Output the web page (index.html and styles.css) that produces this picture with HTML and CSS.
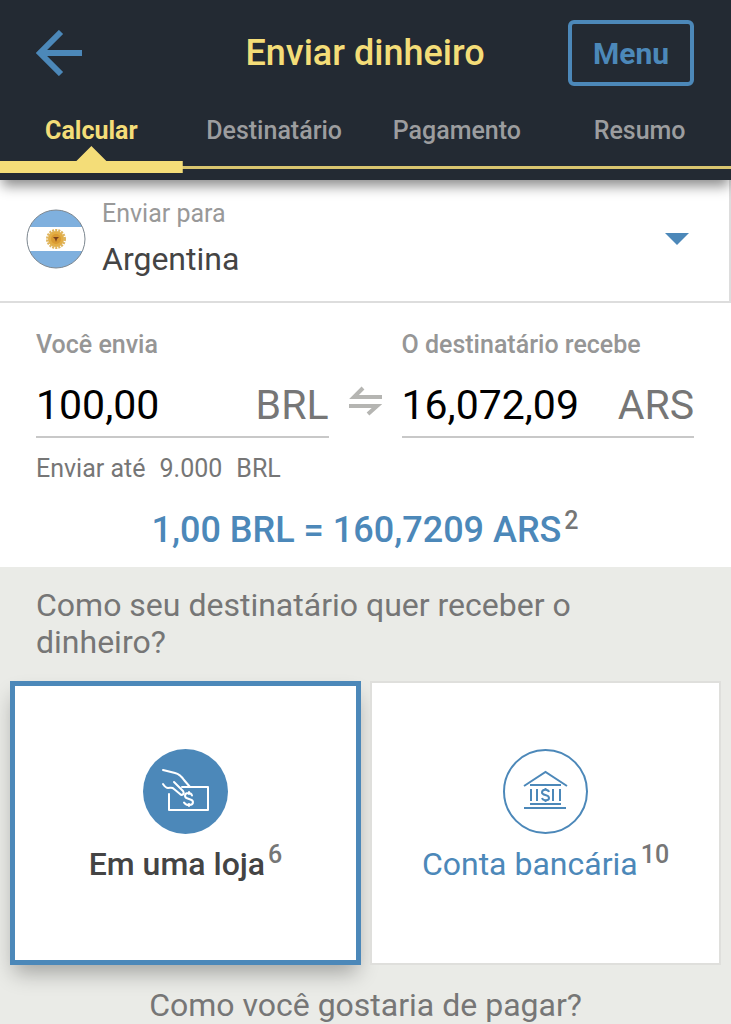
FILE: index.html
```html
<!DOCTYPE html>
<html lang="pt-BR">
<head>
  <meta charset="UTF-8">
  <meta name="viewport" content="width=device-width, initial-scale=1.0">
  <title>Enviar dinheiro</title>
  <link rel="stylesheet" href="styles.css">
</head>
<body>

  <header class="header">
    <div class="top-bar">
      <button class="back-btn" type="button" aria-label="Voltar">
        <svg width="46" height="46" viewBox="0 0 46 46" fill="none" stroke="currentColor" stroke-width="6">
          <path d="M25 2 L4 23 L25 44 M4 23 H46"/>
        </svg>
      </button>
      <h1 class="title">Enviar dinheiro</h1>
      <button class="menu-btn" type="button">Menu</button>
    </div>

    <nav class="tabs">
      <a class="tab active" href="#calcular">Calcular</a>
      <a class="tab" href="#destinatario">Destinatário</a>
      <a class="tab" href="#pagamento">Pagamento</a>
      <a class="tab" href="#resumo">Resumo</a>
    </nav>
  </header>

  <main>
    <section class="country">
      <svg class="flag" viewBox="0 0 60 60">
        <clipPath id="round"><circle cx="30" cy="30" r="29"/></clipPath>
        <g clip-path="url(#round)">
          <rect width="60" height="60" fill="#fff"/>
          <rect width="60" height="18" fill="#7fb0de"/>
          <rect y="42" width="60" height="18" fill="#7fb0de"/>
        </g>
        <circle cx="30" cy="30" r="29" fill="none" stroke="#7d8790"/>
        <circle cx="30" cy="30" r="8" fill="#e3ae45"/>
        <circle cx="30" cy="30" r="8.500" fill="none" stroke="#dfb45c" stroke-width="3" stroke-dasharray="2 1"/>
        <circle cx="30" cy="30" r="5" fill="#d99a32"/>
        <path d="M27 28h6l-2 2-1 3-1-3z" fill="#7a3f1c"/>
      </svg>
      <div class="country-field">
        <label for="country">Enviar para</label>
        <select id="country">
          <option>Argentina</option>
        </select>
      </div>
      <svg class="caret" width="24" height="12" viewBox="0 0 24 12"><path d="M0 0H24L12 12Z" fill="currentColor"/></svg>
    </section>

    <section class="calculator">
      <div class="amounts">
        <div class="amount">
          <label for="send">Você envia</label>
          <div class="amount-row">
            <input id="send" type="text" inputmode="decimal" value="100,00">
            <span class="currency">BRL</span>
          </div>
        </div>
        <svg class="swap" width="33" height="30" viewBox="0 0 33 30" fill="none" stroke="currentColor" stroke-width="4">
          <path d="M33 11H5L14 2M0 20H28L19 28"/>
        </svg>
        <div class="amount">
          <label for="receive">O destinatário recebe</label>
          <div class="amount-row">
            <input id="receive" type="text" inputmode="decimal" value="16,072,09">
            <span class="currency">ARS</span>
          </div>
        </div>
      </div>
      <p class="limit"><span>Enviar até</span> <span>9.000</span> <span>BRL</span></p>
      <p class="rate">1,00 BRL = 160,7209 ARS<sup>2</sup></p>
    </section>

    <section class="delivery">
      <h2 class="question">Como seu destinatário quer receber o dinheiro?</h2>
      <div class="options">
        <button class="option selected" type="button" aria-pressed="true">
          <svg class="option-icon" viewBox="0 0 85 85" fill="none" stroke="#fff" stroke-width="2" stroke-linecap="round" stroke-linejoin="round">
            <circle cx="42.5" cy="42.5" r="42.5" fill="#4c88b9" stroke="none"/>
            <path d="M20 21L32 24C36 25 39 28 41 31L47 38M20 35C22 38 23 39 25 39C28 39 29 38 31 40L37 45C39 47 42 45 40 42L31 33"/>
            <path d="M39 38H65V61H26V45"/>
            <path d="M49 46.500C48 43 42 43 42 47C42 51 50 49 50 53C50 57 43 57 41 53.500M46 43V45M46 55V57"/>
          </svg>
          <span class="option-label">Em uma loja<sup>6</sup></span>
        </button>
        <button class="option" type="button" aria-pressed="false">
          <svg class="option-icon" viewBox="0 0 85 85" fill="none" stroke="#4c88b9" stroke-width="2">
            <circle cx="42.5" cy="42.5" r="41.5"/>
            <path d="M21 37L42.500 23L64 37M27 36H58M27 55H58M21 59H63M28 40V52M34 40V52M50 40V52M57 40V52"/>
            <path d="M46 43C45 40 39 40 39 43.500C39 47 46 45 46 49C46 52 40 52 39 49M42.500 39V41M42.500 51V53"/>
          </svg>
          <span class="option-label">Conta bancária<sup>10</sup></span>
        </button>
      </div>
      <h2 class="question centered">Como você gostaria de pagar?</h2>
    </section>
  </main>

</body>
</html>
```

FILE: styles.css
```css
* {
  box-sizing: border-box;
}

body {
  margin: 0;
  background-color: #eaebe7;
  color: #767676;
  font-family: Roboto, "Liberation Sans", sans-serif;
  font-size: 25px;
  line-height: 30px;
}

button,
input,
select {
  font-family: inherit;
}

/* header */
.header {
  position: relative;
  padding: 20px 0 7px;
  background-color: #232a33;
  box-shadow: 0 8px 12px -2px rgba(0, 0, 0, 0.45);
}

.top-bar {
  display: grid;
  grid-template-columns: 1fr auto 1fr;
  align-items: center;
  padding: 0 37px 0 36px;
}

.back-btn {
  display: flex;
  justify-self: start;
  padding: 0;
  border: none;
  background: none;
  color: #4c88b9;
  cursor: pointer;
}

.title {
  margin: 0;
  color: #f4dd78;
  font-size: 36px;
  font-weight: 500;
}

.menu-btn {
  justify-self: end;
  width: 126px;
  height: 66px;
  padding: 0;
  border: 4px solid #4c88b9;
  border-radius: 6px;
  background: none;
  color: #4c88b9;
  font-size: 30px;
  font-weight: 700;
  cursor: pointer;
}

.tabs {
  position: relative;
  display: grid;
  grid-template-columns: repeat(4, 1fr);
}

.tabs::after {
  content: "";
  position: absolute;
  left: 0;
  right: 0;
  bottom: 4px;
  height: 3px;
  background-color: #d9c56f;
}

.tab {
  position: relative;
  padding: 30px 0 27px;
  color: #9c9d9f;
  font-size: 25px;
  font-weight: 500;
  text-align: center;
  text-decoration: none;
}

.tab.active {
  color: #f4dd78;
  font-weight: 700;
}

.tab.active::after {
  content: "";
  position: absolute;
  left: 0;
  right: 0;
  bottom: 0;
  z-index: 1;
  height: 27px;
  background-color: #f4dd78;
  clip-path: polygon(0 15px, calc(50% - 15px) 15px, 50% 0, calc(50% + 15px) 15px, 100% 15px, 100% 100%, 0 100%);
}

/* country */
.country {
  display: flex;
  align-items: center;
  gap: 16px;
  padding: 19px 40px 23px 26px;
  border-right: 2px solid #ddd;
  border-bottom: 2px solid #ddd;
  background-color: #fff;
}

.flag {
  width: 60px;
  height: 60px;
}

.country-field {
  flex: 1;
  display: flex;
  flex-direction: column;
  gap: 11px;
  color: #999;
}

.country-field select {
  height: 38px;
  padding: 0;
  border: none;
  background: none;
  appearance: none;
  color: #444;
  font-size: 32px;
}

.caret {
  color: #4c88b9;
}

/* calculator */
.calculator {
  padding: 27px 37px 19px 36px;
  background-color: #fff;
}

.amounts {
  display: grid;
  grid-template-columns: minmax(0, 1fr) auto minmax(0, 1fr);
  gap: 20px;
}

.amount label {
  display: block;
  color: #969696;
  font-size: 25px;
  font-weight: 500;
  white-space: nowrap;
}

.amount-row {
  display: flex;
  align-items: baseline;
  height: 78px;
  padding-top: 21px;
  border-bottom: 2px solid #c8c8c8;
}

.amount-row input {
  flex: 1;
  min-width: 0;
  padding: 0;
  border: none;
  background: none;
  color: #000;
  font-size: 41px;
}

.currency {
  font-size: 41px;
}

.swap {
  align-self: center;
  margin-top: 34px;
  color: #b5b5b2;
}

.limit {
  display: flex;
  gap: 14px;
  margin: 16px 0 28px;
  font-size: 25px;
}

.rate {
  margin: 0;
  color: #4c88b9;
  font-size: 36px;
  font-weight: 500;
  line-height: 36px;
  text-align: center;
}

sup {
  margin-left: 3px;
  color: #767676;
  font-size: 25px;
  font-weight: 500;
  line-height: 0;
}

/* delivery */
.delivery {
  padding: 20px 10px 0;
}

.question {
  margin: 0 26px 20px;
  font-size: 32px;
  font-weight: 400;
  line-height: 37px;
}

.question.centered {
  margin: 22px 0 0;
  text-align: center;
}

.options {
  display: grid;
  grid-template-columns: 1fr 1fr;
  gap: 9px;
}

.option {
  display: flex;
  flex-direction: column;
  align-items: center;
  justify-content: center;
  gap: 12px;
  height: 284px;
  padding: 0 0 16px;
  border: 2px solid #dfdfdc;
  background-color: #fff;
  color: #4c88b9;
  font-size: 32px;
  line-height: 36px;
  cursor: pointer;
}

.option.selected {
  border: 5px solid #4c88b9;
  box-shadow: 0 12px 20px -4px rgba(0, 0, 0, 0.3);
  color: #444;
  font-weight: 500;
}

.option-icon {
  width: 85px;
  height: 85px;
}
```
